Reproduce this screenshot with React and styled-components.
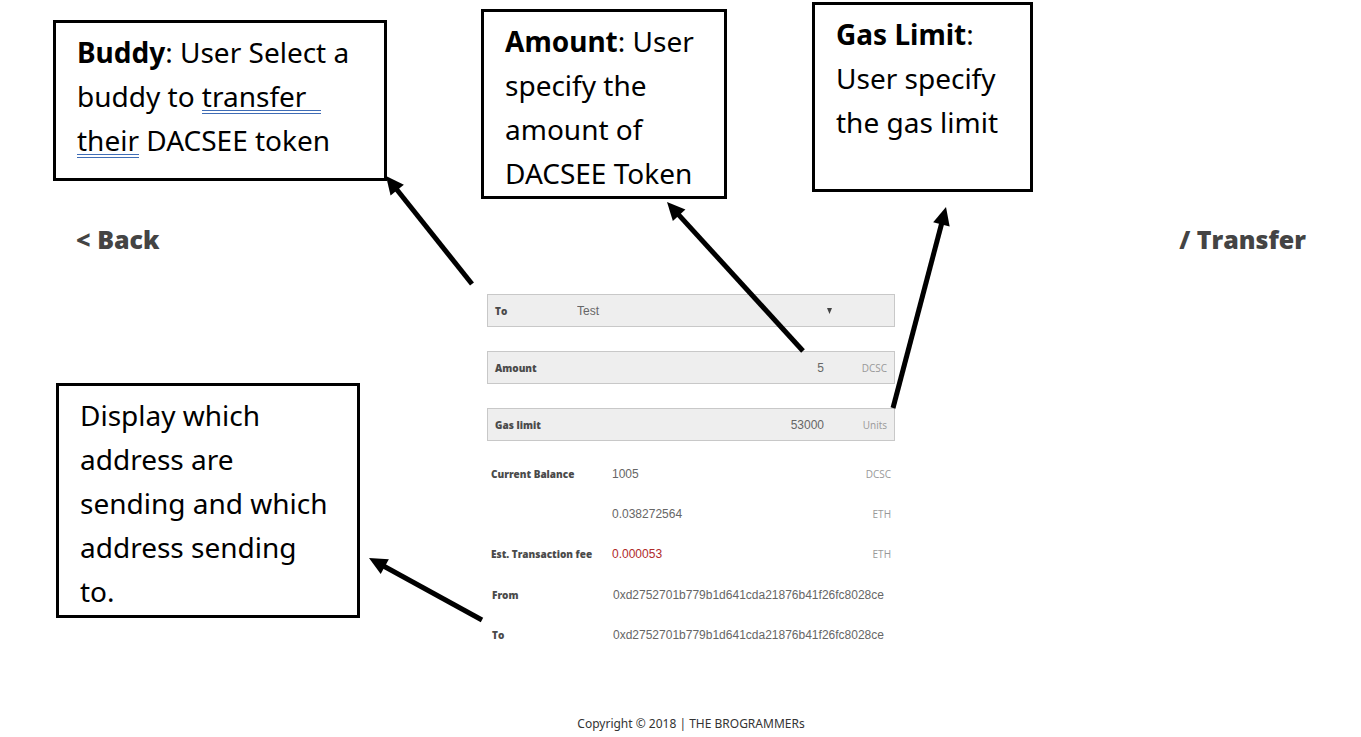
import React from "react";
import styled, { createGlobalStyle } from "styled-components";

const GlobalStyle = createGlobalStyle`
  *, *::before, *::after { box-sizing: border-box; }
  body {
    margin: 0;
    background: #fff;
    color: #4a4a4a;
    font-family: "Open Sans", "Noto Sans", sans-serif;
  }
`;

const Page = styled.div`
  position: relative;
  min-height: 100vh;
  display: flex;
  flex-direction: column;
  padding: 222px 55px 3px 76px;
`;

const Header = styled.header`
  display: flex;
  justify-content: space-between;
  align-items: center;
  line-height: 34px;
`;

const BackLink = styled.a`
  color: #444;
  font-size: 25px;
  font-weight: 800;
  text-decoration: none;
`;

const Title = styled.h1`
  margin: 0;
  color: #444;
  font-size: 25px;
  font-weight: 800;
`;

const Main = styled.main`
  width: 100%;
  max-width: 408px;
  margin: 38px auto 0;
`;

const Form = styled.form`
  display: flex;
  flex-direction: column;
  gap: 24px;
`;

const Field = styled.div`
  display: flex;
  align-items: center;
  height: 33px;
  padding: 0 7px;
  background: #eee;
  border: 1px solid #c8c8c8;
`;

const Label = styled.label`
  flex: 0 0 82px;
  font-size: 10px;
  font-weight: 800;
`;

const Picker = styled.div`
  position: relative;
  flex: 0 0 255px;
`;

const Select = styled.select`
  width: 100%;
  height: 24px;
  padding: 0;
  border: 0;
  outline: 0;
  appearance: none;
  background: transparent;
  color: #666;
  font: 12px "Liberation Sans", Arial, sans-serif;
`;

const Caret = styled.svg`
  position: absolute;
  right: 0;
  top: 10px;
  width: 5px;
  height: 6px;
  pointer-events: none;
`;

const Input = styled.input`
  flex: 1;
  min-width: 0;
  height: 24px;
  padding: 0;
  border: 0;
  outline: 0;
  background: transparent;
  color: #666;
  text-align: right;
  font: 12px "Liberation Sans", Arial, sans-serif;
`;

const Unit = styled.span`
  flex: 0 0 63px;
  color: #999;
  font-size: 10px;
  text-align: right;
`;

const Summary = styled.dl`
  margin: 13px 0 0;
  padding: 0 4px;
`;

const Addresses = styled(Summary)`
  margin: 1px 0 0;
  padding: 0 5px;
`;

const Line = styled.div`
  display: flex;
  align-items: center;
  height: 40px;
`;

const Term = styled.dt`
  flex: 0 0 121px;
  font-size: 10px;
  font-weight: 800;
  white-space: nowrap;
`;

const Value = styled.dd`
  flex: 1;
  margin: 0;
  color: ${(p) => (p.$alert ? "#b02a2a" : "#666")};
  font: 12px "Liberation Sans", Arial, sans-serif;
  white-space: nowrap;
`;

const Footer = styled.footer`
  margin-top: auto;
  color: #333;
  font-family: "Noto Sans", "Open Sans", sans-serif;
  font-size: 12px;
  line-height: 20px;
  text-align: center;
`;

const Callout = styled.aside`
  position: absolute;
  left: ${(p) => p.$left}px;
  top: ${(p) => p.$top}px;
  width: ${(p) => p.$width}px;
  height: ${(p) => p.$height}px;
  padding: 7px 21px;
  background: #fff;
  border: 3px solid #000;
  color: #000;
  font-family: "Noto Sans", "Open Sans", sans-serif;
  font-size: 28px;
  line-height: 44px;
  white-space: nowrap;
`;

const Grammar = styled.span`
  display: inline-block;
  border-bottom: 4px double #3f6cb5;
  line-height: 28px;
  white-space: pre;
`;

const Arrows = styled.svg`
  position: absolute;
  left: 0;
  top: 0;
  width: 1361px;
  max-width: 100%;
  height: 737px;
  pointer-events: none;
`;

const arrows = [
  [472, 284, 386, 176],
  [803, 351, 667, 202],
  [893, 408, 946, 207],
  [482, 620, 369, 558],
];

function Arrow({ points: [x1, y1, x2, y2] }) {
  const length = Math.hypot(x2 - x1, y2 - y1);
  const angle = (Math.atan2(y2 - y1, x2 - x1) * 180) / Math.PI;
  return (
    <g transform={`translate(${x1} ${y1}) rotate(${angle})`}>
      <path d={`M0 0H${length - 15}`} stroke="#000" strokeWidth="5" />
      <path d={`M${length} 0l-18 -8.5v17z`} />
    </g>
  );
}

export default function App() {
  return (
    <>
      <GlobalStyle />
      <Page>
        <Header>
          <BackLink href="#back">&lt; Back</BackLink>
          <Title>/ Transfer</Title>
        </Header>
        <Main>
          <Form>
            <Field>
              <Label htmlFor="to">To</Label>
              <Picker>
                <Select id="to" defaultValue="Test">
                  <option>Test</option>
                </Select>
                <Caret viewBox="0 0 5 6" aria-hidden="true">
                  <path d="M0 0h5L2.5 6z" fill="#444" />
                </Caret>
              </Picker>
            </Field>
            <Field>
              <Label htmlFor="amount">Amount</Label>
              <Input id="amount" defaultValue="5" />
              <Unit>DCSC</Unit>
            </Field>
            <Field>
              <Label htmlFor="gas">Gas limit</Label>
              <Input id="gas" defaultValue="53000" />
              <Unit>Units</Unit>
            </Field>
          </Form>
          <Summary>
            <Line>
              <Term>Current Balance</Term>
              <Value>1005</Value>
              <Unit as="dd">DCSC</Unit>
            </Line>
            <Line>
              <Term />
              <Value>0.038272564</Value>
              <Unit as="dd">ETH</Unit>
            </Line>
            <Line>
              <Term>Est. Transaction fee</Term>
              <Value $alert>0.000053</Value>
              <Unit as="dd">ETH</Unit>
            </Line>
          </Summary>
          <Addresses>
            <Line>
              <Term>From</Term>
              <Value>0xd2752701b779b1d641cda21876b41f26fc8028ce</Value>
            </Line>
            <Line>
              <Term>To</Term>
              <Value>0xd2752701b779b1d641cda21876b41f26fc8028ce</Value>
            </Line>
          </Addresses>
        </Main>
        <Footer>Copyright © 2018 | THE BROGRAMMERs</Footer>

        <Callout $left={53} $top={20} $width={334} $height={161}>
          <b>Buddy</b>: User Select a<br />
          buddy to <Grammar>transfer  </Grammar><br />
          <Grammar>their</Grammar> DACSEE token
        </Callout>
        <Callout $left={481} $top={9} $width={246} $height={190}>
          <b>Amount</b>: User<br />
          specify the<br />
          amount of<br />
          DACSEE Token
        </Callout>
        <Callout $left={812} $top={2} $width={221} $height={190}>
          <b>Gas Limit</b>:<br />
          User specify<br />
          the gas limit
        </Callout>
        <Callout $left={56} $top={383} $width={304} $height={235}>
          Display which<br />
          address are<br />
          sending and which<br />
          address sending<br />
          to.
        </Callout>
        <Arrows aria-hidden="true">
          {arrows.map((points) => (
            <Arrow key={points.join()} points={points} />
          ))}
        </Arrows>
      </Page>
    </>
  );
}
